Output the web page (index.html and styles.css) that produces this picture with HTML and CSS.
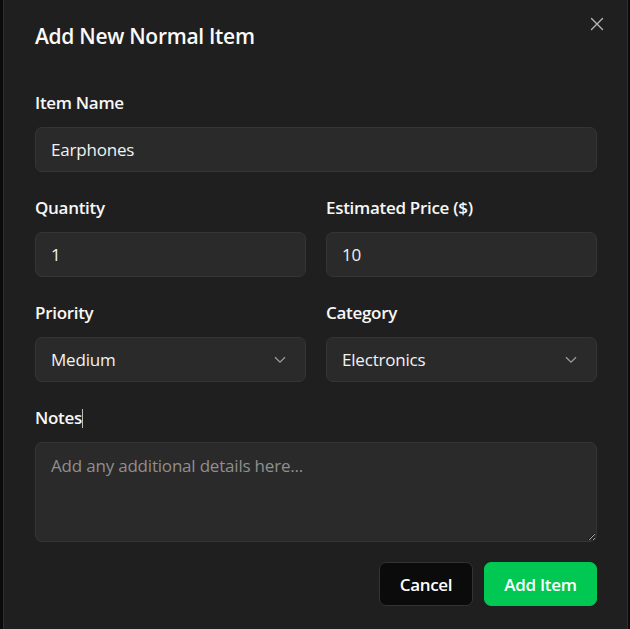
FILE: index.html
```html
<!DOCTYPE html>
<html lang="en">
<head>
<meta charset="utf-8">
<title>Add New Normal Item</title>
<link rel="stylesheet" href="styles.css">
</head>
<body>
<div class="modal">
  <button class="close" type="button" aria-label="Close">
    <svg width="14" height="14" viewBox="0 0 14 14"><path d="M1.5 1.5 L12.5 12.5 M12.5 1.5 L1.5 12.5" stroke="#b5b5b5" stroke-width="1.4" fill="none" stroke-linecap="round"/></svg>
  </button>
  <h2 class="title">Add New Normal Item</h2>
  <form class="form">
    <div class="field">
      <label class="label">Item Name</label>
      <input class="control" type="text" value="Earphones">
    </div>
    <div class="row">
      <div class="field">
        <label class="label">Quantity</label>
        <input class="control" type="text" value="1">
      </div>
      <div class="field">
        <label class="label">Estimated Price ($)</label>
        <input class="control" type="text" value="10">
      </div>
    </div>
    <div class="row">
      <div class="field">
        <label class="label">Priority</label>
        <div class="select-wrap">
          <select class="control select"><option>Medium</option></select>
          <svg class="chev" width="12" height="8" viewBox="0 0 12 8"><path d="M1 1.2 L6 6.2 L11 1.2" stroke="#9c9c9c" stroke-width="1.3" fill="none"/></svg>
        </div>
      </div>
      <div class="field">
        <label class="label">Category</label>
        <div class="select-wrap">
          <select class="control select"><option>Electronics</option></select>
          <svg class="chev" width="12" height="8" viewBox="0 0 12 8"><path d="M1 1.2 L6 6.2 L11 1.2" stroke="#9c9c9c" stroke-width="1.3" fill="none"/></svg>
        </div>
      </div>
    </div>
    <div class="field">
      <label class="label">Notes<span class="caret"></span></label>
      <textarea class="control area" placeholder="Add any additional details here..."></textarea>
    </div>
    <div class="actions">
      <button class="btn btn-cancel" type="button">Cancel</button>
      <button class="btn btn-add" type="button">Add Item</button>
    </div>
  </form>
</div>
</body>
</html>
```
FILE: styles.css
```css
html, body {
  margin: 0;
  padding: 0;
  background: #0b0b0b;
  height: 100%;
  overflow: hidden;
}
body {
  font-family: "Open Sans", "Noto Sans", sans-serif;
  color: #f5f5f5;
  color-scheme: dark;
}
.modal {
  position: relative;
  margin-left: 3px;
  width: 625px;
  height: 100vh;
  box-sizing: border-box;
  background: #1f1f1f;
  border-left: 1px solid #2f2f2f;
  border-right: 1px solid #2f2f2f;
  padding: 23px 30px 0 31px;
  overflow: hidden;
}
.close {
  position: absolute;
  top: 16px;
  right: 22px;
  width: 16px;
  height: 16px;
  padding: 0;
  border: 0;
  background: none;
  display: flex;
  align-items: center;
  justify-content: center;
}
.title {
  margin: 0;
  font-size: 21px;
  line-height: 26px;
  font-weight: 600;
  letter-spacing: -0.3px;
  color: #fafafa;
}
.form {
  margin-top: 41px;
  display: flex;
  flex-direction: column;
  gap: 23px;
}
.row {
  display: grid;
  grid-template-columns: 1fr 1fr;
  column-gap: 20px;
}
.field {
  display: flex;
  flex-direction: column;
}
.label {
  font-size: 17px;
  line-height: 26px;
  font-weight: 600;
  letter-spacing: -0.3px;
  margin-bottom: 11px;
  color: #f7f7f7;
}
.caret {
  display: inline-block;
  width: 1px;
  height: 19px;
  background: #bdbdbd;
  vertical-align: -4px;
}
.control {
  box-sizing: border-box;
  height: 45px;
  width: 100%;
  background: #2a2a2a;
  border: 1px solid #353535;
  border-radius: 7px;
  padding: 0 15px;
  font-family: inherit;
  font-size: 17px;
  letter-spacing: -0.2px;
  color: #f2f2f2;
  outline: none;
}
.select-wrap {
  position: relative;
}
.select {
  appearance: none;
  -webkit-appearance: none;
}
.chev {
  position: absolute;
  right: 20px;
  top: 19px;
  pointer-events: none;
}
.area {
  height: 100px;
  padding: 11px 15px;
  line-height: 24px;
  resize: vertical;
  display: block;
}
.area::placeholder {
  color: #8f8f8f;
}
.actions {
  display: flex;
  justify-content: flex-end;
  gap: 11px;
  margin-top: -3px;
}
.btn {
  height: 44px;
  border-radius: 7px;
  font-family: inherit;
  font-size: 17px;
  font-weight: 600;
  letter-spacing: -0.3px;
  color: #ffffff;
  padding: 0 18px;
}
.btn-cancel {
  background: #0b0b0b;
  border: 1px solid #333333;
  width: 94px;
}
.btn-add {
  background: #00c853;
  border: 1px solid #00c853;
  width: 113px;
}
```
